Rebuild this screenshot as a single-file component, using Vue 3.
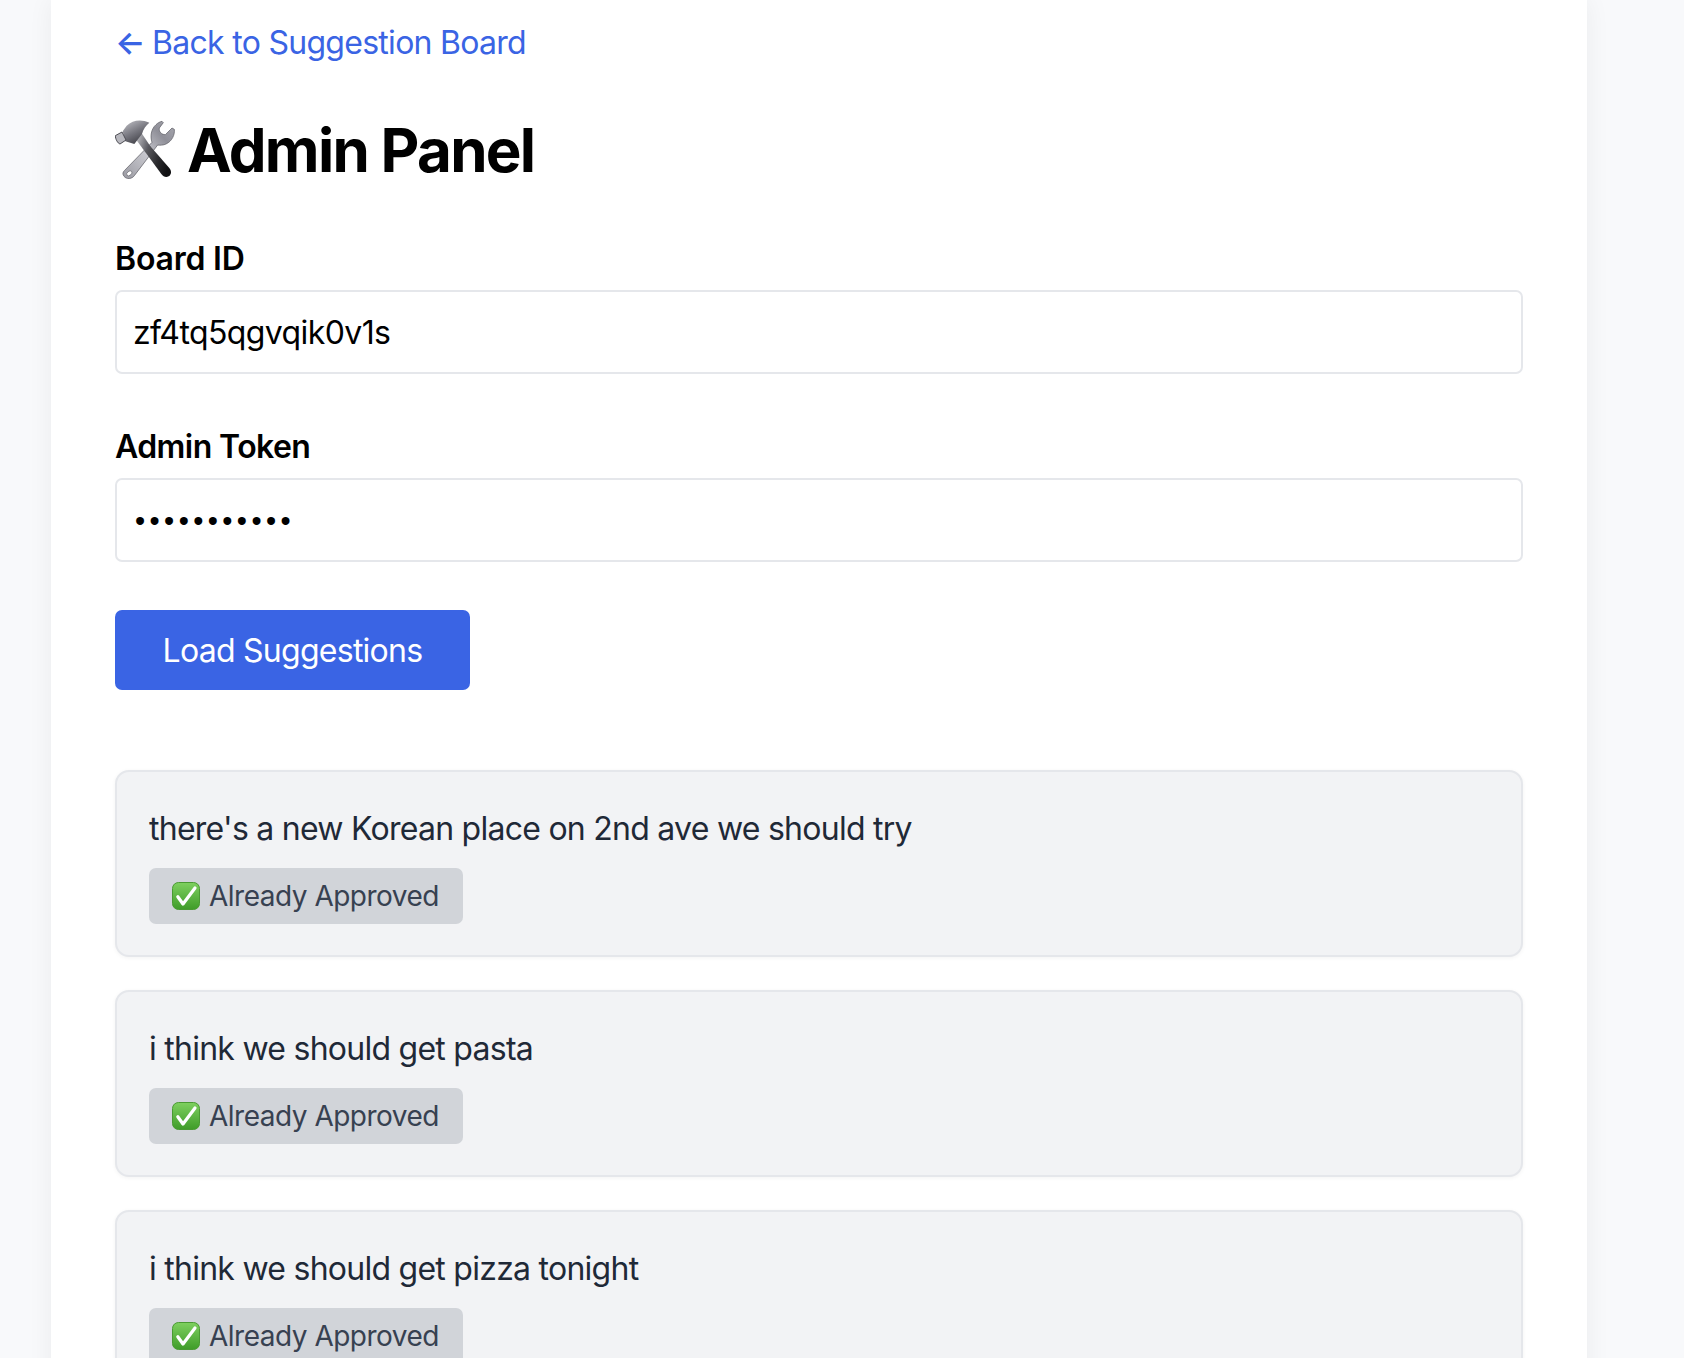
<script setup>
const items = [
  "there's a new Korean place on 2nd ave we should try",
  'i think we should get pasta',
  'i think we should get pizza tonight'
]
</script>

<template>
  <div class="page">
    <main class="panel">
      <a class="back" href="#"><span class="arrow">←</span> Back to Suggestion Board</a>
      <h1 class="title">
        <svg class="tools" viewBox="27 29 180 178" aria-hidden="true">
          <defs>
            <linearGradient id="steel" x1="0" y1="1" x2="1" y2="0">
              <stop offset="0" stop-color="#9a9aa2" />
              <stop offset="0.45" stop-color="#c9c9cf" />
              <stop offset="0.75" stop-color="#8f8f98" />
              <stop offset="1" stop-color="#a9a9b1" />
            </linearGradient>
            <linearGradient id="head" x1="0" y1="0" x2="0.6" y2="1">
              <stop offset="0" stop-color="#c5c5cb" />
              <stop offset="0.55" stop-color="#77777f" />
              <stop offset="1" stop-color="#3f3f46" />
            </linearGradient>
            <linearGradient id="neck" x1="0" y1="0" x2="1" y2="0.4">
              <stop offset="0" stop-color="#d6d6da" />
              <stop offset="1" stop-color="#55555c" />
            </linearGradient>
            <linearGradient id="grip" x1="0" y1="0" x2="1" y2="0.4">
              <stop offset="0" stop-color="#66666b" />
              <stop offset="0.6" stop-color="#2a2a2d" />
              <stop offset="1" stop-color="#101012" />
            </linearGradient>
          </defs>
          <path d="M55 180L138 95C132 78 135 55 150 42 155 37 162 33 168 32L172 36 160 52C158 62 166 72 178 72L198 52 205 56C207 72 198 92 180 100 172 104 162 104 155 103L85 195C78 205 62 207 54 197 49 190 50 185 55 180z" fill="url(#steel)" stroke="#55555c" stroke-width="2" />
          <ellipse cx="70" cy="188" rx="9" ry="6" transform="rotate(-40 70 188)" fill="#fff" stroke="#66666d" stroke-width="2" />
          <path d="M85 80L105 65 135 110 118 125z" fill="url(#neck)" />
          <path d="M116 122L133 107 190 172C198 182 196 192 188 197 180 202 172 198 166 190z" fill="url(#grip)" />
          <path d="M130 36C105 25 80 28 62 45L50 62 58 92 85 100 108 70C112 55 120 44 130 36z" fill="url(#head)" />
          <path d="M28 75L48 64 60 88 42 100C35 98 28 85 28 75z" fill="#b8b8be" stroke="#4c4c53" stroke-width="3" />
        </svg>
        <span>Admin Panel</span>
      </h1>

      <label class="label" for="board">Board ID</label>
      <input id="board" class="field" type="text" value="zf4tq5qgvqik0v1s" />

      <label class="label label-next" for="token">Admin Token</label>
      <input id="token" class="field secret" type="password" value="abcdefghijk" />

      <button class="load" type="button">Load Suggestions</button>

      <section class="list">
        <article v-for="item in items" :key="item" class="card">
          <p class="text">{{ item }}</p>
          <span class="badge">
            <svg class="check" viewBox="0 0 28 28" aria-hidden="true">
              <defs>
                <linearGradient id="green" x1="0" y1="0" x2="0" y2="1">
                  <stop offset="0" stop-color="#7ed05f" />
                  <stop offset="1" stop-color="#3f9c29" />
                </linearGradient>
              </defs>
              <rect x=".5" y=".5" width="27" height="27" rx="6" fill="url(#green)" stroke="#4a9a33" />
              <path d="M5.800 14.700L11 22 23 6" fill="none" stroke="#fff" stroke-width="3.200" stroke-linecap="round" stroke-linejoin="round" />
            </svg>
            <span>Already Approved</span>
          </span>
        </article>
      </section>
    </main>
  </div>
</template>

<style>
html, body { margin: 0; background: #f8f9fb; }
</style>

<style scoped>
.page {
  height: 1358px;
  overflow: hidden;
  background: #f8f9fb;
  font-family: Inter, "Liberation Sans", sans-serif;
  padding-left: 51px;
  box-sizing: border-box;
}
.panel {
  width: 1536px;
  min-height: 1358px;
  box-sizing: border-box;
  padding: 21px 64px 0;
  background: #fff;
  box-shadow: 0 0 24px rgba(0, 0, 0, 0.06);
  display: flex;
  flex-direction: column;
  align-items: stretch;
}
.back {
  display: block;
  color: #3a64e4;
  text-decoration: none;
  font-size: 32px;
  line-height: 44px;
  letter-spacing: -0.72px;
}
.arrow {
  font-weight: 600;
  margin-right: -1px;
}
.title {
  display: flex;
  align-items: center;
  gap: 12px;
  margin: 51px 0 0;
  font-size: 60px;
  line-height: 68px;
  font-weight: 700;
  letter-spacing: -1.700px;
  color: #000;
}
.tools { width: 60px; height: 60px; flex: none; }
.label {
  display: block;
  margin: 55px 0 11px;
  font-size: 32px;
  line-height: 40px;
  font-weight: 600;
  letter-spacing: -0.2px;
  color: #000;
}
.label-next {
  margin-top: 53px;
  letter-spacing: -0.58px;
}
.field {
  display: block;
  width: 100%;
  height: 84px;
  box-sizing: border-box;
  padding: 0 16px;
  border: 2px solid #e5e7eb;
  border-radius: 7px;
  background: #fff;
  color: #000;
  font-family: inherit;
  font-size: 32px;
  letter-spacing: -0.6px;
  outline: none;
}
.secret {
  padding: 3px 16px 0 18px;
  font-family: "Liberation Sans", sans-serif;
  font-size: 29px;
  letter-spacing: 4.400px;
}
.load {
  align-self: flex-start;
  width: 355px;
  height: 80px;
  margin-top: 48px;
  padding: 1px 0 0;
  border: 0;
  border-radius: 7px;
  background: #3a64e4;
  color: #fff;
  font-family: inherit;
  font-size: 32px;
  letter-spacing: -0.74px;
}
.list {
  display: flex;
  flex-direction: column;
  gap: 33px;
  margin-top: 80px;
}
.card {
  box-sizing: border-box;
  height: 187px;
  padding: 33px 32px 32px;
  border: 2px solid #e5e7eb;
  border-radius: 14px;
  background: #f2f3f5;
  box-shadow: 0 1px 4px rgba(0, 0, 0, 0.05);
  flex: none;
}
.text {
  margin: 0 0 15px;
  font-size: 32px;
  line-height: 48px;
  letter-spacing: -0.74px;
  color: #1f2937;
}
.badge {
  display: inline-flex;
  align-items: center;
  gap: 9px;
  height: 56px;
  padding: 0 24px 0 23px;
  border-radius: 7px;
  background: #d1d4d9;
  color: #374151;
  font-size: 28px;
  letter-spacing: -0.5px;
}
.check { width: 28px; height: 28px; flex: none; }
</style>
